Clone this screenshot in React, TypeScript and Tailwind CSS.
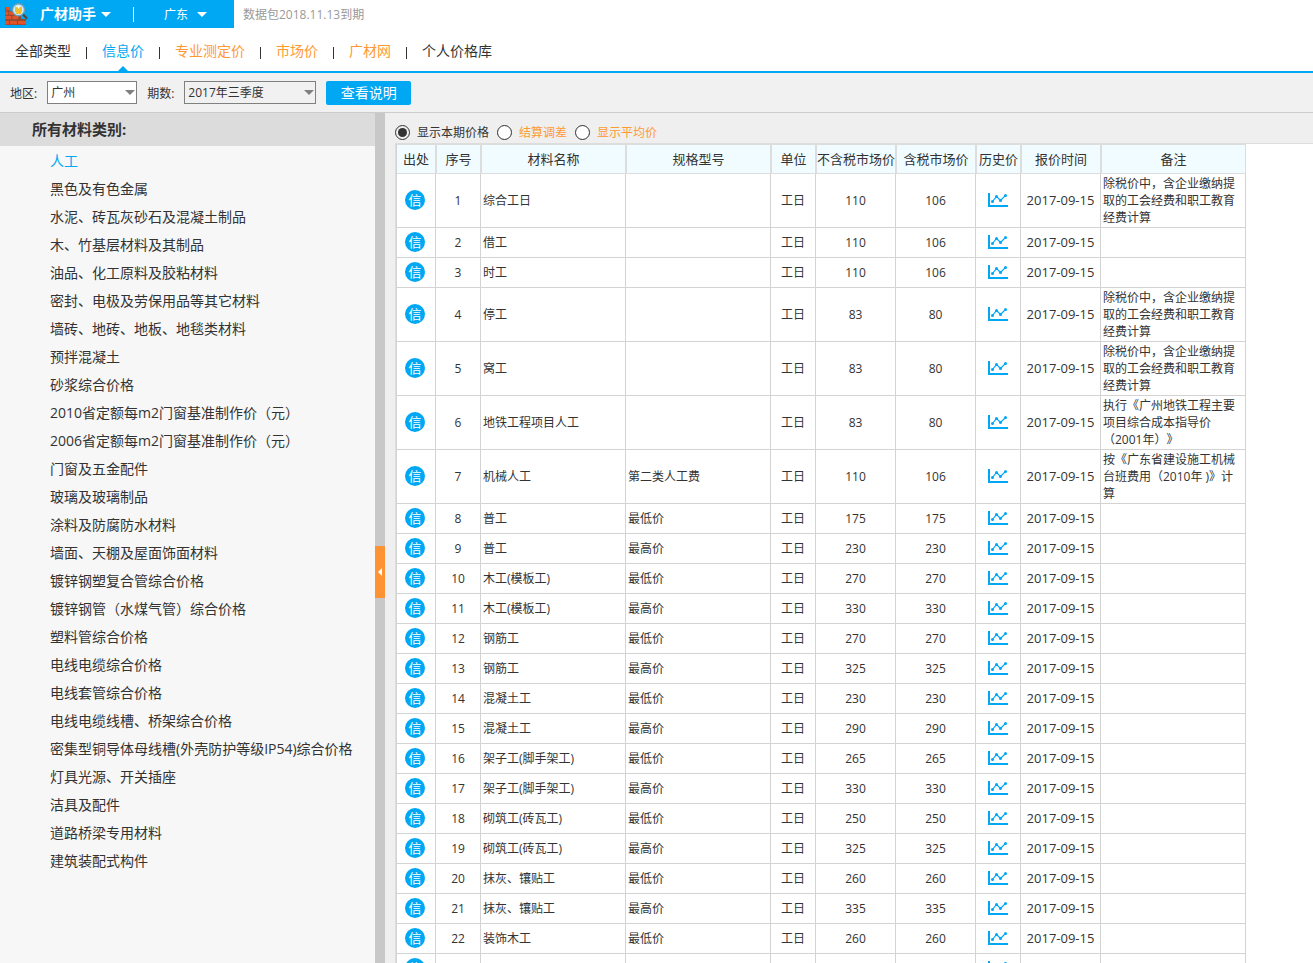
import React, { useState } from 'react';
import { clsx } from 'clsx';

interface MaterialRow {
    name: string;
    spec?: string;
    unit: string;
    net: string;
    gross: string;
    date: string;
    note?: string;
}

const TABS = [
    { name: '全部类型', color: 'text-[#333]' },
    { name: '信息价', color: 'text-[#00a8f3]' },
    { name: '专业测定价', color: 'text-[#ff9933]' },
    { name: '市场价', color: 'text-[#ff9933]' },
    { name: '广材网', color: 'text-[#ff9933]' },
    { name: '个人价格库', color: 'text-[#333]' }
];

const CATEGORIES = [
    '人工',
    '黑色及有色金属',
    '水泥、砖瓦灰砂石及混凝土制品',
    '木、竹基层材料及其制品',
    '油品、化工原料及胶粘材料',
    '密封、电极及劳保用品等其它材料',
    '墙砖、地砖、地板、地毯类材料',
    '预拌混凝土',
    '砂浆综合价格',
    '2010省定额每m2门窗基准制作价（元）',
    '2006省定额每m2门窗基准制作价（元）',
    '门窗及五金配件',
    '玻璃及玻璃制品',
    '涂料及防腐防水材料',
    '墙面、天棚及屋面饰面材料',
    '镀锌钢塑复合管综合价格',
    '镀锌钢管（水煤气管）综合价格',
    '塑料管综合价格',
    '电线电缆综合价格',
    '电线套管综合价格',
    '电线电缆线槽、桥架综合价格',
    '密集型铜导体母线槽(外壳防护等级IP54)综合价格',
    '灯具光源、开关插座',
    '洁具及配件',
    '道路桥梁专用材料',
    '建筑装配式构件'
];

const PRICE_MODES = ['显示本期价格', '结算调差', '显示平均价'];

const COLUMNS = [
    { name: '出处', width: 'w-[39px]' },
    { name: '序号', width: 'w-[45px]' },
    { name: '材料名称', width: 'w-[145px]' },
    { name: '规格型号', width: 'w-[145px]' },
    { name: '单位', width: 'w-[45px]' },
    { name: '不含税市场价', width: 'w-[80px]' },
    { name: '含税市场价', width: 'w-[80px]' },
    { name: '历史价', width: 'w-[45px]' },
    { name: '报价时间', width: 'w-[80px]' },
    { name: '备注', width: 'w-[145px]' }
];

const UNION_NOTE = '除税价中，含企业缴纳提取的工会经费和职工教育经费计算';

const row = (name: string, spec: string, net: string, gross: string, note = ''): MaterialRow => ({
    name, spec, net, gross, note, unit: '工日', date: '2017-09-15'
});

const ROWS: MaterialRow[] = [
    row('综合工日', '', '110', '106', UNION_NOTE),
    row('借工', '', '110', '106'),
    row('时工', '', '110', '106'),
    row('停工', '', '83', '80', UNION_NOTE),
    row('窝工', '', '83', '80', UNION_NOTE),
    row('地铁工程项目人工', '', '83', '80', '执行《广州地铁工程主要项目综合成本指导价（2001年）》'),
    row('机械人工', '第二类人工费', '110', '106', '按《广东省建设施工机械台班费用（2010年 )》计算'),
    row('普工', '最低价', '175', '175'),
    row('普工', '最高价', '230', '230'),
    row('木工(模板工)', '最低价', '270', '270'),
    row('木工(模板工)', '最高价', '330', '330'),
    row('钢筋工', '最低价', '270', '270'),
    row('钢筋工', '最高价', '325', '325'),
    row('混凝土工', '最低价', '230', '230'),
    row('混凝土工', '最高价', '290', '290'),
    row('架子工(脚手架工)', '最低价', '265', '265'),
    row('架子工(脚手架工)', '最高价', '330', '330'),
    row('砌筑工(砖瓦工)', '最低价', '250', '250'),
    row('砌筑工(砖瓦工)', '最高价', '325', '325'),
    row('抹灰、镶贴工', '最低价', '260', '260'),
    row('抹灰、镶贴工', '最高价', '335', '335'),
    row('装饰木工', '最低价', '260', '260')
];

function Logo() {
    return (
        <svg className="w-6 h-6 shrink-0" viewBox="0 0 24 24">
            <path d="M1 5h5v4h5v4h6v4h5v6H1z" fill="#8a4a30" />
            <g fill="#e2532a">
                <rect x="1.5" y="5" width="4.5" height="3.4" />
                <rect x="1" y="9.4" width="3.4" height="3.4" />
                <rect x="5.2" y="9.4" width="5" height="3.4" />
                <rect x="1" y="13.8" width="6.4" height="3.4" />
                <rect x="8.4" y="13.8" width="6" height="3.4" />
                <rect x="1" y="18.8" width="4" height="3.6" />
                <rect x="6" y="18.8" width="7" height="3.6" />
                <rect x="14" y="18.8" width="8" height="3.6" />
            </g>
            <path d="M18.5 12l4 4" stroke="#5b4334" strokeWidth="2.2" strokeLinecap="round" />
            <circle cx="14.5" cy="7.8" r="6" fill="#cdeefa" stroke="#6f9fb8" strokeWidth="1.4" />
            <path d="M11 4.5l2 .8h3l2-.8v5L16.5 12h-4L11 9.500z" fill="#f3bd2e" />
            <path d="M13.200 4.500h2.600l-1.300 2.500z" fill="#fff" />
        </svg>
    );
}

function Caret({ className }: { className?: string }) {
    return (
        <svg className={clsx('w-[10px] h-[5px]', className)} viewBox="0 0 10 5" fill="currentColor">
            <path d="M0 0h10L5 5z" />
        </svg>
    );
}

function TrendIcon() {
    return (
        <svg className="w-5 h-[14px]" viewBox="0 0 20 14" fill="none" stroke="#00a8f3">
            <path d="M1 0v13h19" strokeWidth="2" />
            <path d="M4.5 8.5l4-5 4 4 5-5" strokeWidth="1.2" />
            <g fill="#00a8f3" stroke="none">
                <circle cx="4.5" cy="8.5" r="1.5" />
                <circle cx="8.5" cy="3.5" r="1.5" />
                <circle cx="12.5" cy="7.5" r="1.5" />
                <circle cx="17.5" cy="2.5" r="1.5" />
            </g>
        </svg>
    );
}

function SelectBox({ id, label, options, className }: { id: string; label: string; options: string[]; className: string }) {
    return (
        <>
            <label htmlFor={id} className="pt-[2px]">{label}</label>
            <div className="relative">
                <select id={id} className={clsx('block appearance-none h-[23px] pl-[3px] border border-[#808080] outline-none', className)}>
                    {options.map(option => <option key={option}>{option}</option>)}
                </select>
                <Caret className="absolute right-[2px] top-[9px] text-[#808080] pointer-events-none" />
            </div>
        </>
    );
}

export default function App() {
    const [tab, setTab] = useState('信息价');
    const [category, setCategory] = useState('人工');
    const [mode, setMode] = useState(PRICE_MODES[0]);
    const [sidebarOpen, setSidebarOpen] = useState(true);

    const border = 'border-r border-b border-[#d3d3d3]';
    const cell = clsx(border, 'px-[2px] py-px');

    return (
        <div className="h-screen flex flex-col overflow-hidden bg-white text-[#333] text-xs leading-[17px] font-['Open_Sans','Noto_Sans_CJK_SC',sans-serif] [text-spacing-trim:space-all]">
            {/* Title bar */}
            <header className="flex h-7 shrink-0 items-center">
                <div className="flex h-full w-[234px] items-center bg-[#00a8f3] text-white pl-1">
                    <Logo />
                    <button className="ml-3 flex items-center gap-[5px] text-sm font-bold">广材助手 <Caret /></button>
                    <div className="w-px h-[15px] bg-white ml-[22px]" />
                    <button className="ml-[30px] flex items-center gap-[9px]">广东 <Caret /></button>
                </div>
                <span className="ml-[9px] text-[#999]">数据包2018.11.13到期</span>
            </header>

            {/* Tabs */}
            <nav className="flex h-[45px] shrink-0 items-center border-b-2 border-[#00a8f3] px-[15px] text-sm">
                {TABS.map((item, i) => (
                    <React.Fragment key={item.name}>
                        {i > 0 && <div className="w-px h-3 mx-[15px] mt-[7px] bg-[#333]" />}
                        <button onClick={() => setTab(item.name)} className={clsx('relative h-full pt-[3px]', item.color)}>
                            {item.name}
                            {tab === item.name && <Caret className="absolute bottom-0 left-1/2 -translate-x-1/2 rotate-180 text-[#00a8f3]" />}
                        </button>
                    </React.Fragment>
                ))}
            </nav>

            {/* Filters */}
            <div className="flex h-10 shrink-0 items-center gap-[10px] border-b border-[#ccc] bg-[#f1f1f1] px-[10px]">
                <SelectBox id="area" label="地区:" options={['广州']} className="w-[90px] bg-white" />
                <SelectBox id="period" label="期数:" options={['2017年三季度']} className="w-[132px] bg-[#f1f1f1]" />
                <button className="w-[85px] h-6 rounded-xs bg-[#00a8f3] text-sm text-white">查看说明</button>
            </div>

            <div className="flex flex-1 min-h-0">
                {sidebarOpen && (
                    <aside className="w-[375px] shrink-0 overflow-hidden bg-[#f7f7f7]">
                        <h2 className="h-[33px] bg-[#dcdcdc] pl-8 text-[15px] leading-[33px] font-bold">所有材料类别:</h2>
                        <ul className="text-sm leading-7 pt-px">
                            {CATEGORIES.map(name => (
                                <li key={name}>
                                    <a
                                        href="#"
                                        onClick={() => setCategory(name)}
                                        className={clsx('block pl-[50px] whitespace-nowrap', category === name && 'text-[#00a8f3]')}
                                    >
                                        {name}
                                    </a>
                                </li>
                            ))}
                        </ul>
                    </aside>
                )}

                {/* Collapse bar */}
                <div className="w-[10px] shrink-0 bg-[#c8c8c8] pt-[433px]">
                    <button
                        aria-label="收起"
                        onClick={() => setSidebarOpen(!sidebarOpen)}
                        className="flex w-full h-[52px] items-center justify-center bg-[#ff9233]"
                    >
                        <svg className="w-1 h-2" viewBox="0 0 4 8" fill="#fff"><path d="M4 0v8L0 4z" /></svg>
                    </button>
                </div>

                <main className="flex flex-1 min-w-0 flex-col bg-[#efefef] pl-[10px]">
                    <div className="flex h-[30px] shrink-0 items-center gap-2 pt-2">
                        {PRICE_MODES.map((name, i) => (
                            <label key={name} className={clsx('flex items-center gap-[7px]', i > 0 && 'text-[#ff9933]')}>
                                <input
                                    type="radio"
                                    name="mode"
                                    checked={mode === name}
                                    onChange={() => setMode(name)}
                                    className="appearance-none w-[15px] h-[15px] p-[2px] rounded-full border border-[#333] bg-white bg-clip-padding checked:bg-[#333] checked:bg-clip-content"
                                />
                                {name}
                            </label>
                        ))}
                    </div>

                    <div className="flex-1 min-h-0 overflow-hidden border-t border-l border-[#ddd] bg-white">
                        <table className="w-[850px] table-fixed border-separate border-spacing-0 border-l border-[#d3d3d3] text-center">
                            <thead>
                                <tr className="h-[30px] bg-[#f0fcff] text-[13px]">
                                    {COLUMNS.map((col, i) => (
                                        <th
                                            key={col.name}
                                            className={clsx('border-t border-r border-b border-[#ddd] font-normal whitespace-nowrap p-0', i > 0 && 'border-l', col.width)}
                                        >
                                            {col.name}
                                        </th>
                                    ))}
                                </tr>
                            </thead>
                            <tbody>
                                {[...ROWS, null].map((item, i) => (
                                    <tr key={i} className="h-[30px]">
                                        <td className={clsx(border, 'pl-[2px] pr-1 pb-[2px]')}>
                                            <span className="mx-auto block w-5 h-5 rounded-full bg-[#00a8f3] text-[13px] leading-5 text-white">信</span>
                                        </td>
                                        <td className={cell}>{item && i + 1}</td>
                                        <td className={clsx(cell, 'text-left')}>{item?.name}</td>
                                        <td className={clsx(cell, 'text-left')}>{item?.spec}</td>
                                        <td className={cell}>{item?.unit}</td>
                                        <td className={cell}>{item?.net}</td>
                                        <td className={cell}>{item?.gross}</td>
                                        <td className={clsx(border, 'px-[2px] pb-[2px]')}>
                                            <button aria-label="历史价" className="block mx-auto"><TrendIcon /></button>
                                        </td>
                                        <td className={clsx(cell, 'text-[13px]')}>{item?.date}</td>
                                        <td className={clsx(cell, 'text-left')}>{item?.note}</td>
                                    </tr>
                                ))}
                            </tbody>
                        </table>
                    </div>
                </main>
            </div>
        </div>
    );
}
